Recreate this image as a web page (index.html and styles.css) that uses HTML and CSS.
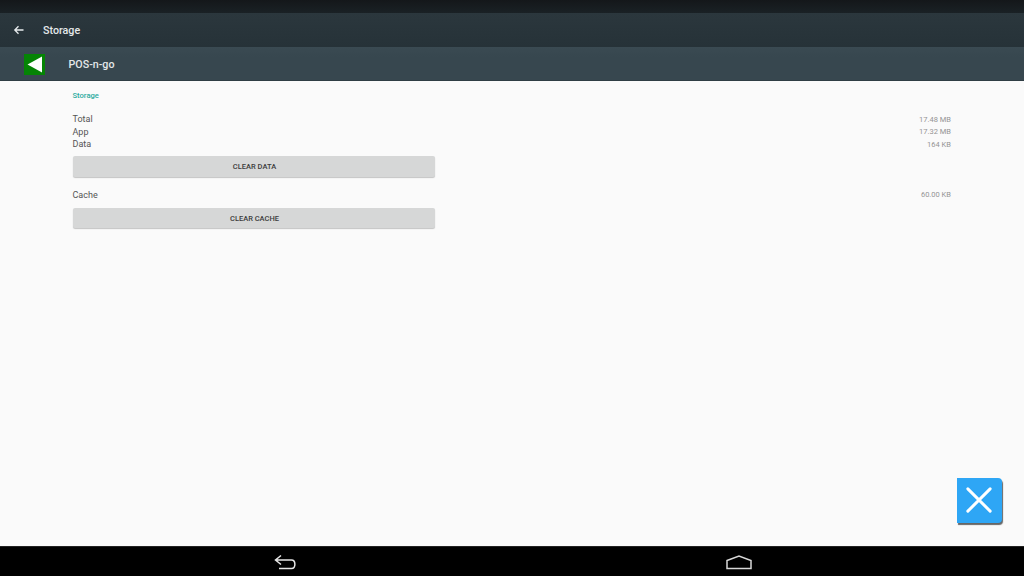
FILE: index.html
```html
<!DOCTYPE html>
<html lang="en">
<head>
<meta charset="utf-8">
<title>Storage</title>
<link rel="stylesheet" href="styles.css">
</head>
<body>
<div class="screen">
  <div class="status"></div>
  <header class="toolbar">
    <svg class="back" width="12" height="12" viewBox="0 0 12 12"><path d="M10.500 6H2M5.500 2.300 1.800 6l3.700 3.700" fill="none" stroke="#e8ecee" stroke-width="1.300"/></svg>
    <span class="title">Storage</span>
  </header>
  <div class="apphead">
    <svg class="appicon" width="21" height="21" viewBox="0 0 21 21"><rect width="21" height="21" fill="#058405"/><path d="M3.500 10.500 18 2.500v16z" fill="#fff"/></svg>
    <span class="appname">POS-n-go</span>
  </div>
  <main class="content">
    <h2 class="section">Storage</h2>
    <div class="rows">
      <div class="row"><span>Total</span><span class="val">17.48 MB</span></div>
      <div class="row"><span>App</span><span class="val">17.32 MB</span></div>
      <div class="row"><span>Data</span><span class="val">164 KB</span></div>
    </div>
    <button class="btn">CLEAR DATA</button>
    <div class="row cache"><span>Cache</span><span class="val">60.00 KB</span></div>
    <button class="btn">CLEAR CACHE</button>
    <div class="fab">
      <svg width="26" height="26" viewBox="0 0 28 28"><path d="M2 2 26 26M26 2 2 26" stroke="#fff" stroke-width="3.200" stroke-linecap="round"/></svg>
    </div>
  </main>
  <nav class="nav">
    <svg class="navback" width="22" height="16" viewBox="0 0 22 16"><path d="M7 1.500 1.500 6 7 10.500M1.500 6H17.500C22 6 22 14.500 17.500 14.500H5" fill="none" stroke="#e6e6e6" stroke-width="1.500"/></svg>
    <svg class="navhome" width="26" height="15" viewBox="0 0 26 15"><path d="M1 5.500 13 1l12 4.500V13.500H1z" fill="none" stroke="#d8d8d8" stroke-width="1.500"/></svg>
  </nav>
</div>
</body>
</html>
```
FILE: styles.css
```css
* { box-sizing: border-box; }
html, body { margin: 0; padding: 0; }
body { width: 1024px; height: 576px; overflow: hidden; font-family: Roboto, "Liberation Sans", sans-serif; }
.screen { width: 1024px; height: 576px; display: flex; flex-direction: column; background: #fafafa; }
.status { height: 13px; background: linear-gradient(#14171a, #1a2125); }
.toolbar { height: 34px; background: linear-gradient(#2b373d, #263238); display: flex; align-items: center; padding-left: 13px; }
.back { margin-top: -1px; }
.title { margin-left: 18px; color: #e4e8ea; font-size: 10.700px; font-weight: 500; }
.apphead { height: 34px; background: linear-gradient(#3a4a52, #37474f 30%); display: flex; align-items: center; padding: 1px 0 0 24px; box-shadow: inset 0 -1px 0 #2f3d44; }
.appicon { flex: none; }
.appname { margin-left: 23.500px; color: #e4e8ea; font-size: 10.700px; font-weight: 500; }
.content { flex: 1; position: relative; padding: 10px 73px 0 72.500px; }
.section { margin: 0 0 12px; font-size: 7.600px; line-height: 10px; font-weight: 500; color: #2bab9e; }
.rows { display: flex; flex-direction: column; }
.row { display: flex; justify-content: space-between; align-items: center; height: 12.500px; font-size: 9px; color: #555; }
.val { font-size: 7.500px; color: #949494; }
.btn { display: block; width: 362px; height: 21px; margin: 5px 0 0 0; padding: 0 0 0 2px; border: 0; border-radius: 2px; background: #d6d7d7; box-shadow: 0 1px 1px #c4c4c4; font-family: inherit; font-size: 7.500px; font-weight: 500; color: #3c3c3c; }
.cache { margin-top: 12px; }
.btn + .cache + .btn { margin-top: 7px; height: 20px; }
.fab { position: absolute; left: 957px; top: 397px; width: 45px; height: 45px; padding: 0 2px 1px 0; background: #2ea6f5; border-radius: 0 4px 4px 0; box-shadow: 1px 2px 1px #666; display: flex; align-items: center; justify-content: center; }
.nav { height: 30px; background: #000; border-top: 1px solid #222; position: relative; display: flex; align-items: center; }
.navback { position: absolute; left: 274px; top: 7px; }
.navhome { position: absolute; left: 726px; top: 8px; }
```
